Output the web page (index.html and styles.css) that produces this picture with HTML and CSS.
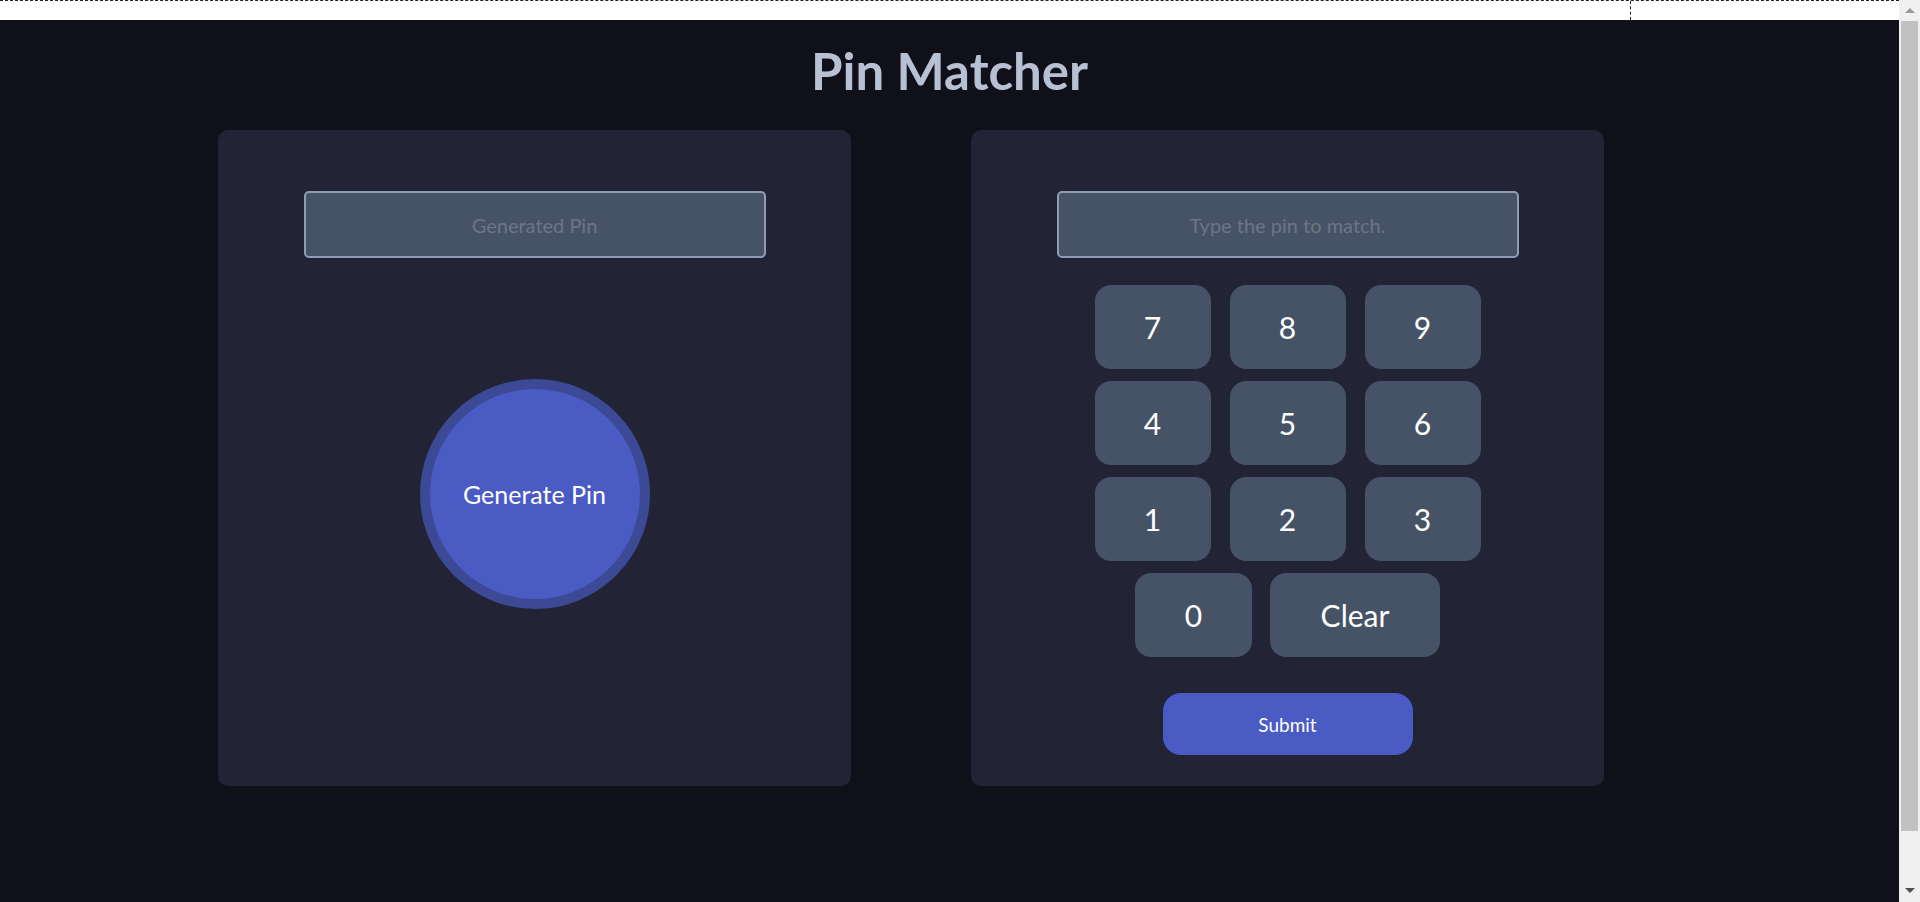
FILE: index.html
```html
<!DOCTYPE html>
<html lang="en">
<head>
<meta charset="utf-8">
<title>Pin Matcher</title>
<link rel="stylesheet" href="styles.css">
</head>
<body>
<div class="window">
  <div class="viewport">
    <div class="ruler"><span class="ruler-mark"></span></div>
    <main class="app">
      <h1 class="title">Pin Matcher</h1>
      <div class="cards">
        <section class="card card-generate">
          <input class="pin-input" type="text" placeholder="Generated Pin" readonly>
          <button class="generate-btn"><span class="generate-inner">Generate Pin</span></button>
        </section>
        <section class="card card-match">
          <input class="pin-input" type="text" placeholder="Type the pin to match.">
          <div class="keypad">
            <div class="key-row">
              <button class="key">7</button>
              <button class="key">8</button>
              <button class="key">9</button>
            </div>
            <div class="key-row">
              <button class="key">4</button>
              <button class="key">5</button>
              <button class="key">6</button>
            </div>
            <div class="key-row">
              <button class="key">1</button>
              <button class="key">2</button>
              <button class="key">3</button>
            </div>
            <div class="key-row key-row-last">
              <button class="key key-zero">0</button>
              <button class="key key-clear">Clear</button>
            </div>
          </div>
          <button class="submit-btn">Submit</button>
        </section>
      </div>
    </main>
  </div>
  <div class="scrollbar">
    <span class="arrow arrow-up"></span>
    <span class="thumb"></span>
    <span class="arrow arrow-down"></span>
  </div>
</div>
</body>
</html>
```

FILE: styles.css
```css
* { box-sizing: border-box; }

html, body {
  margin: 0;
  padding: 0;
  height: 902px;
  overflow: hidden;
}

body {
  font-family: "Lato", "Open Sans", sans-serif;
  background: #ffffff;
}

.window {
  display: flex;
  height: 902px;
}

.viewport {
  flex: 1;
  display: flex;
  flex-direction: column;
  min-width: 0;
}

.ruler {
  height: 20px;
  flex: none;
  background: #ffffff;
  border-top: 1px dashed #222;
  display: flex;
}

.ruler-mark {
  margin-left: 1630px;
  border-left: 1px dashed #222;
  height: 100%;
}

.app {
  flex: 1;
  background: #0f1019;
  padding-top: 20px;
}

.title {
  margin: 0;
  text-align: center;
  font-size: 51px;
  line-height: 62px;
  font-weight: 700;
  color: #b8c1d3;
}

.cards {
  display: flex;
  gap: 120px;
  margin-top: 28px;
  padding-left: 218px;
}

.card {
  width: 633px;
  height: 656px;
  background: #222335;
  border-radius: 10px;
  padding-top: 61px;
  display: flex;
  flex-direction: column;
  align-items: center;
}

.pin-input {
  width: 462px;
  height: 67px;
  background: #465366;
  border: 2px solid #8f9cb4;
  border-radius: 5px;
  text-align: center;
  font-family: "Lato", sans-serif;
  font-size: 20px;
  color: #ffffff;
  outline: none;
}

.pin-input::placeholder {
  color: #6e7584;
}

.generate-btn {
  margin-top: 121px;
  width: 230px;
  height: 230px;
  border-radius: 50%;
  border: 10px solid #3c4995;
  background: #4a5bc4;
  padding: 0;
  color: #ffffff;
  font-family: "Lato", sans-serif;
  font-size: 25px;
  cursor: pointer;
}

.keypad {
  margin-top: 27px;
  display: flex;
  flex-direction: column;
  gap: 12px;
}

.key-row {
  display: flex;
  justify-content: center;
  gap: 19px;
}

.key-row-last {
  gap: 18px;
}

.key {
  width: 116px;
  height: 84px;
  border: none;
  border-radius: 16px;
  background: #465366;
  color: #ffffff;
  font-family: "Lato", sans-serif;
  font-size: 30px;
  line-height: 1.2;
  padding: 0;
  cursor: pointer;
}

.key-zero { width: 117px; }
.key-clear { width: 170px; }

.submit-btn {
  margin-top: 36px;
  width: 250px;
  height: 62px;
  border: none;
  border-radius: 18px;
  background: #4a5bc4;
  color: #ffffff;
  font-family: "Lato", sans-serif;
  font-size: 19px;
  cursor: pointer;
}

.scrollbar {
  width: 21px;
  flex: none;
  background: #f0f0f0;
  display: flex;
  flex-direction: column;
  align-items: center;
}

.arrow {
  width: 0;
  height: 0;
  border-left: 5px solid transparent;
  border-right: 5px solid transparent;
}

.arrow-up {
  margin-top: 8px;
  border-bottom: 5px solid #9a9a9a;
}

.thumb {
  margin-top: 8px;
  width: 17px;
  height: 810px;
  background: #c1c1c1;
}

.arrow-down {
  margin-top: auto;
  margin-bottom: 9px;
  border-top: 5px solid #505050;
}
```
